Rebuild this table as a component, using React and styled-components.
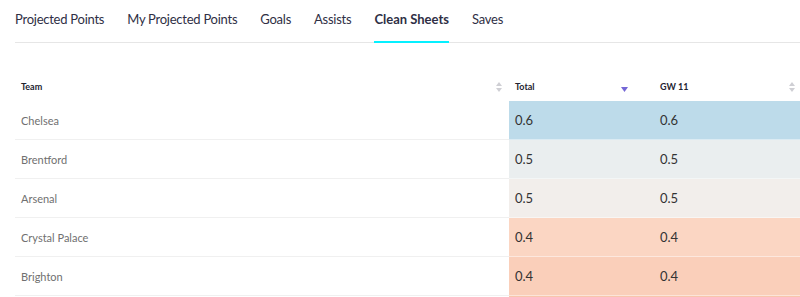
import styled, { createGlobalStyle } from "styled-components";

const GlobalStyle = createGlobalStyle`
  body {
    margin: 0;
    background: #fff;
    font-family: "Lato", "Noto Sans", sans-serif;
  }
`;

const Tabs = styled.nav`
  display: flex;
  gap: 23px;
  margin-left: 15px;
  border-bottom: 1px solid #e6e6e6;
  height: 42px;
`;

const Tab = styled.div`
  position: relative;
  padding-top: 10px;
  font-size: 13px;
  letter-spacing: ${(p) => (p.$active ? "0" : "-0.25px")};
  line-height: 18px;
  color: #2f2f45;
  font-weight: ${(p) => (p.$active ? 700 : 400)};

  &::after {
    content: "";
    display: ${(p) => (p.$active ? "block" : "none")};
    position: absolute;
    left: 0;
    right: 0;
    bottom: -1px;
    height: 2px;
    background: #05f0ff;
  }
`;

const Table = styled.div`
  margin: 27px 0 0 15px;
  display: grid;
  grid-template-columns: 494px 145px 1fr;
`;

const HeadCell = styled.div`
  box-sizing: border-box;
  height: 31px;
  display: flex;
  align-items: center;
  justify-content: space-between;
  padding: 2px 2px 0 6px;
  font-size: 9px;
  font-weight: 700;
  color: #23232f;
`;

const Cell = styled.div`
  height: 38px;
  display: flex;
  align-items: center;
  padding-left: 6px;
  border-bottom: 1px solid ${(p) => (p.$bg ? "rgba(255,255,255,0.45)" : "#f0f0f0")};
  background: ${(p) => p.$bg || "transparent"};
  font-size: ${(p) => (p.$bg ? "13px" : "11px")};
  color: ${(p) => (p.$bg ? "#333" : "#707070")};
`;

const SortWrap = styled.span`
  display: flex;
  flex-direction: column;
  margin-right: ${(p) => p.$offset || 0}px;
  margin-top: ${(p) => (p.$active ? 6 : 0)}px;
`;

function SortIcon({ active, offset }) {
  if (active) {
    return (
      <SortWrap $active $offset={offset}>
        <svg width="7" height="5" viewBox="0 0 7 5">
          <path d="M0 0h7L3.5 5z" fill="#7467d6" />
        </svg>
      </SortWrap>
    );
  }
  return (
    <SortWrap $offset={offset}>
      <svg width="6" height="10" viewBox="0 0 6 10">
        <path d="M0 4L3 0l3 4z M0 6h6L3 10z" fill="#cfcfd4" />
      </svg>
    </SortWrap>
  );
}

const rows = [
  { team: "Chelsea", total: "0.6", gw: "0.6", bg: "#bddbea" },
  { team: "Brentford", total: "0.5", gw: "0.5", bg: "#eaeeef" },
  { team: "Arsenal", total: "0.5", gw: "0.5", bg: "#f2eeeb" },
  { team: "Crystal Palace", total: "0.4", gw: "0.4", bg: "#fbd6c3" },
  { team: "Brighton", total: "0.4", gw: "0.4", bg: "#facfba" },
  { team: "", total: "", gw: "", bg: "#f8c6ac" },
];

const tabs = ["Projected Points", "My Projected Points", "Goals", "Assists", "Clean Sheets", "Saves"];

export default function App() {
  return (
    <>
      <GlobalStyle />
      <Tabs>
        {tabs.map((t) => (
          <Tab key={t} $active={t === "Clean Sheets"}>{t}</Tab>
        ))}
      </Tabs>
      <Table>
        <HeadCell>Team<SortIcon offset={5} /></HeadCell>
        <HeadCell>Total<SortIcon active offset={24} /></HeadCell>
        <HeadCell>GW 11<SortIcon offset={3} /></HeadCell>
        {rows.map((r, i) => (
          <>
            <Cell key={`t${i}`}>{r.team}</Cell>
            <Cell key={`a${i}`} $bg={r.bg}>{r.total}</Cell>
            <Cell key={`g${i}`} $bg={r.bg}>{r.gw}</Cell>
          </>
        ))}
      </Table>
    </>
  );
}
